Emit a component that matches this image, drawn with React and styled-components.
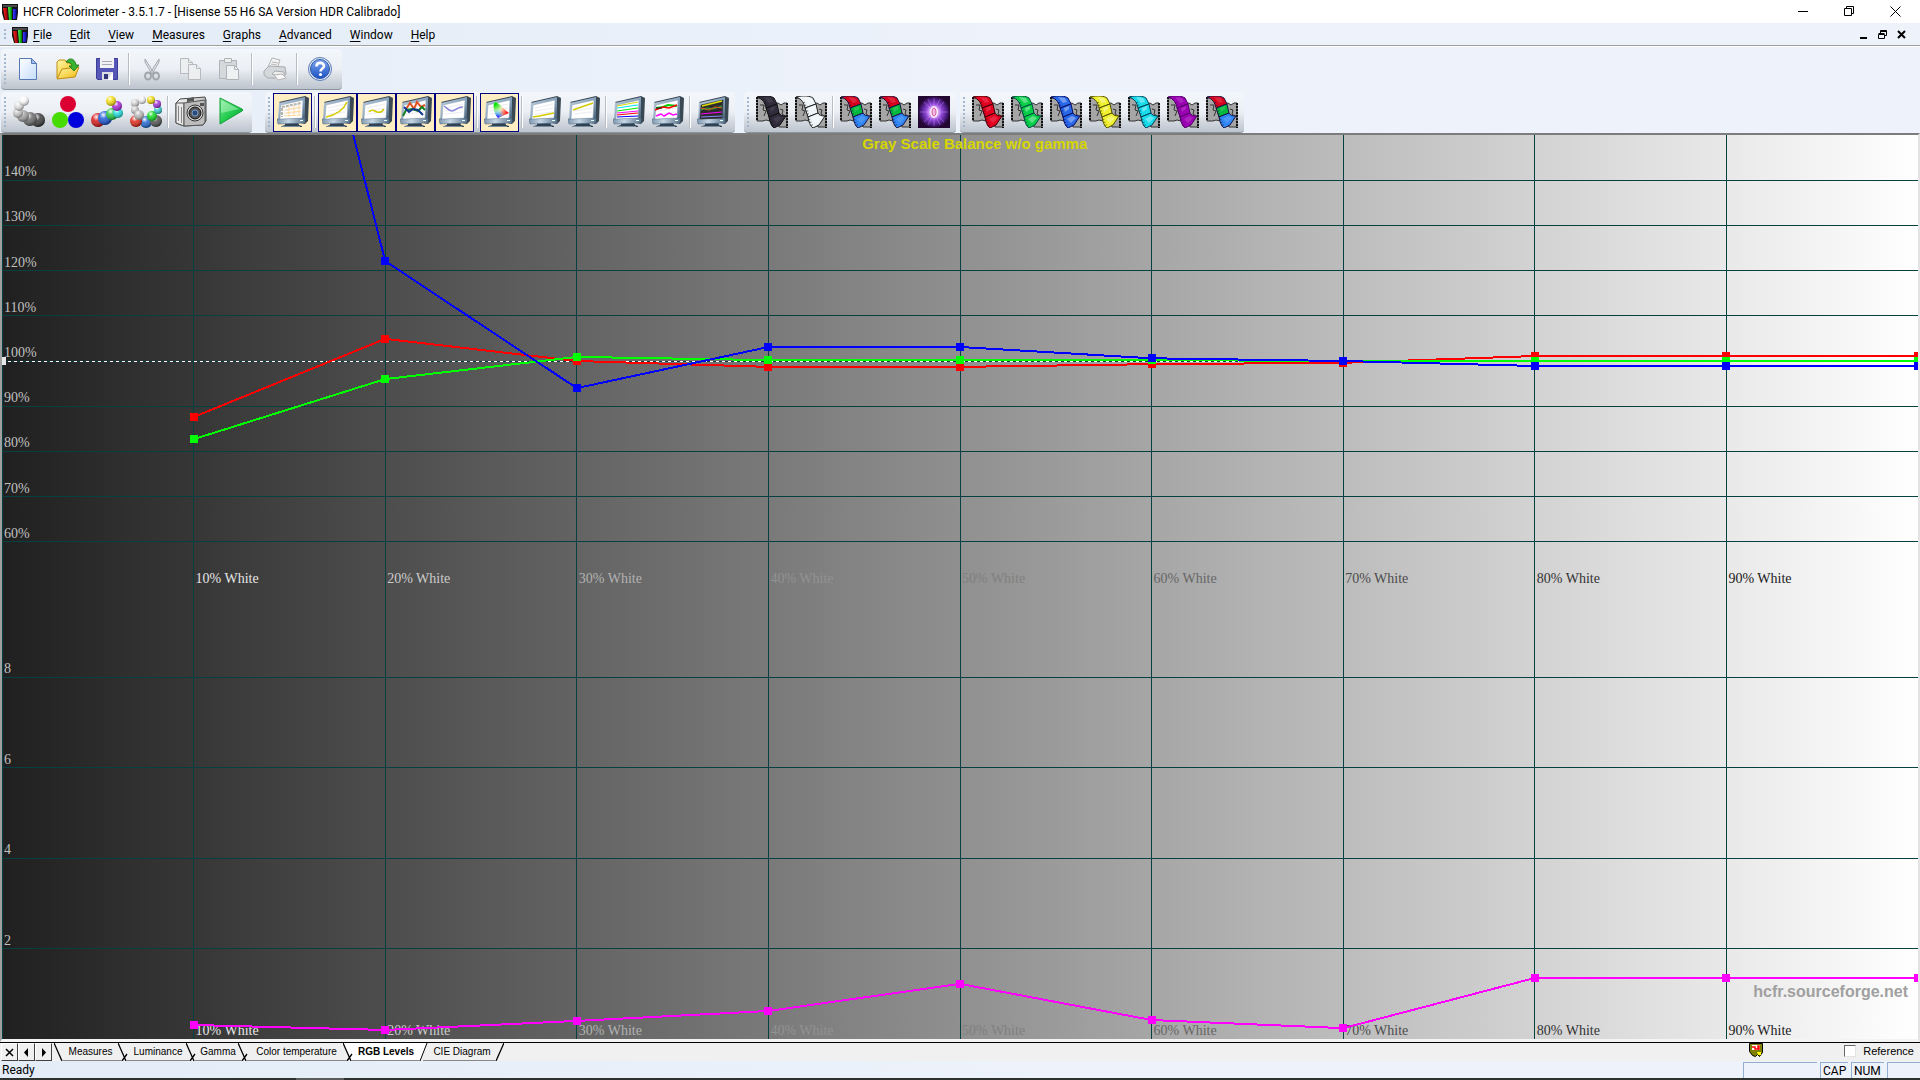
import { useState } from "react";
import styled, { createGlobalStyle } from "styled-components";

const GlobalStyle = createGlobalStyle`
  * { box-sizing: border-box; }
  html, body { margin: 0; padding: 0; }
  body { background: #eef3fb; overflow: hidden; }
  button { font: inherit; color: inherit; border: 0; padding: 0; background: none; }
`;

const menus = ["File", "Edit", "View", "Measures", "Graphs", "Advanced", "Window", "Help"];

/* ---------- chart data ---------- */

const red = [87.6, 104.9, 100, 98.7, 98.7, 99.3, 99.6, 101.1, 101.1, 101.1];
const green = [82.7, 96, 100.9, 100.2, 100.2, 100.2, 100, 100, 100, 100];
const blue = [289, 122.1, 94, 103.1, 103.1, 100.6, 100, 98.9, 98.9, 98.9];
const deltaE = [0.31, 0.2, 0.4, 0.62, 1.22, 0.42, 0.24, 1.35, 1.35, 1.35];

const levelY = (v) => (150 - v) / 2;
const deltaY = (v) => 100 - v * 5;

const levels = [140, 130, 120, 110, 100, 90, 80, 70, 60];
const deltas = [8, 6, 4, 2];
const whites = [
  { at: 10, color: "#e6e6e6" },
  { at: 20, color: "#cccccc" },
  { at: 30, color: "#b2b2b2" },
  { at: 40, color: "#929292" },
  { at: 50, color: "#808080" },
  { at: 60, color: "#666666" },
  { at: 70, color: "#4c4c4c" },
  { at: 80, color: "#333333" },
  { at: 90, color: "#1a1a1a" },
];

const Series = ({ values, toY, color }) => (
  <g fill={color} stroke={color}>
    {values.slice(1).map((v, i) => (
      <line
        key={i}
        x1={`${(i + 1) * 10}%`}
        y1={`${toY(values[i])}%`}
        x2={`${(i + 2) * 10}%`}
        y2={`${toY(v)}%`}
        strokeWidth="2"
      />
    ))}
    {values.map((v, i) => (
      <Marker key={i} x={`${(i + 1) * 10}%`} y={`${toY(v)}%`} width="8" height="8" />
    ))}
  </g>
);

const Chart = () => (
  <ChartArea>
    <Plot role="img" aria-label="Gray Scale Balance w/o gamma">
      <g stroke="#064040" shapeRendering="crispEdges">
        <line x1="0.5" y1="0" x2="0.5" y2="100%" />
        {whites.map((w) => (
          <line key={w.at} x1={`${w.at}%`} y1="0" x2={`${w.at}%`} y2="100%" />
        ))}
        {levels.map((l) => (
          <line key={l} x1="0" y1={`${levelY(l)}%`} x2="100%" y2={`${levelY(l)}%`} />
        ))}
        {deltas.map((d) => (
          <line key={d} x1="0" y1={`${deltaY(d)}%`} x2="100%" y2={`${deltaY(d)}%`} />
        ))}
      </g>
      <line x1="6" y1="25%" x2="100%" y2="25%" stroke="#fff" strokeDasharray="3 3" shapeRendering="crispEdges" />
      <Marker x="0" y="25%" width="4" height="8" fill="#e8e8e8" />

      {levels.map((l) => (
        <AxisLabel key={l} x="2" y={`${levelY(l)}%`} dy="-4">{l}%</AxisLabel>
      ))}
      {deltas.map((d) => (
        <AxisLabel key={d} x="2" y={`${deltaY(d)}%`} dy="-4">{d}</AxisLabel>
      ))}
      {["50%", "100%"].map((y) =>
        whites.map((w) => (
          <AxisLabel key={w.at} x={`${w.at}%`} y={y} dx="2" dy="-4" $color={w.color}>
            {w.at}% White
          </AxisLabel>
        ))
      )}
      <PlotTitle x="45%" y="14" dx="-2">Gray Scale Balance w/o gamma</PlotTitle>
      <g shapeRendering="crispEdges">
        <Series values={red} toY={levelY} color="#ff0000" />
        <Series values={green} toY={levelY} color="#00ff00" />
        <Series values={blue} toY={levelY} color="#0000ff" />
        <Series values={deltaE} toY={deltaY} color="#ff00ff" />
      </g>
      <Site x="100%" y="100%" dx="-10" dy="-42">hcfr.sourceforge.net</Site>
    </Plot>
  </ChartArea>
);

/* ---------- icons ---------- */

const Defs = () => (
  <HiddenSvg aria-hidden="true">
    <defs>
      <radialGradient id="shine" cx="0.38" cy="0.28" r="0.7">
        <stop offset="0" stopColor="#fff" stopOpacity="0.95" />
        <stop offset="0.4" stopColor="#fff" stopOpacity="0.15" />
        <stop offset="1" stopColor="#000" stopOpacity="0.4" />
      </radialGradient>
      <linearGradient id="bezel" x1="0" y1="0" x2="1" y2="1">
        <stop offset="0" stopColor="#c3d3e2" />
        <stop offset="0.6" stopColor="#7f9ab4" />
        <stop offset="1" stopColor="#3d5468" />
      </linearGradient>
      <linearGradient id="bezelLow" x1="0" y1="0" x2="1" y2="0">
        <stop offset="0" stopColor="#7e97ae" />
        <stop offset="0.4" stopColor="#c5d6e4" />
        <stop offset="1" stopColor="#5c7690" />
      </linearGradient>
      <linearGradient id="page" x1="0" y1="0" x2="1" y2="1">
        <stop offset="0" stopColor="#fff" />
        <stop offset="1" stopColor="#c4dcfa" />
      </linearGradient>
      <linearGradient id="folder" x1="0" y1="0" x2="1" y2="1">
        <stop offset="0" stopColor="#fff8a8" />
        <stop offset="1" stopColor="#f3b80c" />
      </linearGradient>
      <linearGradient id="help" x1="0" y1="0" x2="0" y2="1">
        <stop offset="0" stopColor="#7ea8ee" />
        <stop offset="1" stopColor="#1a50c4" />
      </linearGradient>
      <linearGradient id="play" x1="0" y1="0" x2="1" y2="1">
        <stop offset="0" stopColor="#86eb9c" />
        <stop offset="0.5" stopColor="#24cd50" />
        <stop offset="1" stopColor="#0a9a36" />
      </linearGradient>
      <linearGradient id="metal" x1="0" y1="0" x2="1" y2="1">
        <stop offset="0" stopColor="#fafafa" />
        <stop offset="1" stopColor="#8f8f8f" />
      </linearGradient>
      <linearGradient id="barR"><stop offset="0" stopColor="#ff2020" /><stop offset="1" stopColor="#800" /></linearGradient>
      <linearGradient id="barG"><stop offset="0" stopColor="#50ff50" /><stop offset="1" stopColor="#070" /></linearGradient>
      <linearGradient id="barB"><stop offset="0" stopColor="#3a3aff" /><stop offset="1" stopColor="#008" /></linearGradient>
      <radialGradient id="cieGreen" gradientUnits="userSpaceOnUse" cx="10" cy="7" r="10">
        <stop offset="0.2" stopColor="#00e400" />
        <stop offset="1" stopColor="#00e400" stopOpacity="0" />
      </radialGradient>
      <radialGradient id="cieRed" gradientUnits="userSpaceOnUse" cx="25" cy="18" r="10">
        <stop offset="0.2" stopColor="#ff1010" />
        <stop offset="1" stopColor="#ff2020" stopOpacity="0" />
      </radialGradient>
      <radialGradient id="cieBlue" gradientUnits="userSpaceOnUse" cx="13" cy="23" r="10">
        <stop offset="0.2" stopColor="#2410ff" />
        <stop offset="0.6" stopColor="#20a8ff" stopOpacity="0.6" />
        <stop offset="1" stopColor="#20d8ff" stopOpacity="0" />
      </radialGradient>
      <radialGradient id="nova">
        <stop offset="0" stopColor="#fff" />
        <stop offset="0.22" stopColor="#f4c8ff" />
        <stop offset="0.5" stopColor="#9048d8" />
        <stop offset="0.8" stopColor="#4c1c84" />
        <stop offset="1" stopColor="#220830" />
      </radialGradient>
    </defs>
  </HiddenSvg>
);

const AppIcon = () => (
  <svg width="16" height="16" viewBox="0 0 16 16">
    <path fill="#141414" d="M0 0h16v16H0z" />
    <path fill="#4a4a4a" d="M1 1h14v2H1z" />
    <path fill="url(#barR)" d="M1 4h4l1 12H3z" />
    <path fill="url(#barG)" d="M6 3h4v13H7z" />
    <path fill="url(#barB)" d="M11 5h4l-1 10h-3z" />
    <path fill="#fff" d="M0 9l2 7H0zM16 9l-1 7h1z" />
  </svg>
);

const Icon24 = ({ children }) => <svg width="24" height="24" viewBox="0 0 24 24">{children}</svg>;
const Icon32 = ({ children }) => <svg width="32" height="32" viewBox="0 0 32 32">{children}</svg>;

const NewIcon = () => (
  <Icon24>
    <path fill="url(#page)" stroke="#5878b4" d="M2.500 1.500h12l5 5v16h-17z" />
    <path fill="#9dbcf0" stroke="#5878b4" d="M14.500 1.500v5h5z" />
  </Icon24>
);

const OpenIcon = () => (
  <Icon24>
    <path fill="url(#folder)" stroke="#c08c10" d="M1 21V5l2-2h6l2 3h8v5" />
    <path fill="url(#folder)" stroke="#c08c10" d="M1 22l5-10 17-2-4 10z" />
    <path fill="#38b432" stroke="#147010" strokeWidth="0.8" d="M10 5c3-5 9-4 10 3h3l-5 6-5-5h3c-1-3-3-4-6-4z" />
  </Icon24>
);

const SaveIcon = () => (
  <Icon24>
    <path fill="#5656b8" stroke="#3c3c98" d="M1.500 1.500h21v21h-20l-1-1z" />
    <path fill="#f2f2f6" d="M5 1h14v10H5z" />
    <path stroke="#a8a8b4" d="M7 4.500h10M7 7.500h10" />
    <path fill="#dcdce4" d="M7 15h11v8H7z" />
    <path fill="#33337c" d="M9 17h4v5H9z" />
    <path fill="#fff" d="M13 23l4-7h1v7z" />
  </Icon24>
);

const CutIcon = () => (
  <Icon24>
    <g fill="none" stroke="#a2a6ac">
      <path fill="#e8eaec" d="M5 2l9 14-2 1L5 5zM19 2l-9 14 2 1 7-12z" />
      <ellipse cx="8" cy="19" rx="3" ry="3.500" strokeWidth="2" />
      <ellipse cx="16" cy="19" rx="3" ry="3.500" strokeWidth="2" />
    </g>
  </Icon24>
);

const CopyIcon = () => (
  <Icon24>
    <g fill="#eceef0" stroke="#b6babe">
      <path d="M1.500 1.500h8l4 4v11h-12z" />
      <path d="M9.500 1.500v4h4" />
      <path d="M9.500 7.500h8l4 4v11h-12z" />
      <path d="M17.500 7.500v4h4" />
    </g>
  </Icon24>
);

const PasteIcon = () => (
  <Icon24>
    <path fill="#d6d9dc" stroke="#b0b4b8" d="M1.500 3.500h17v18h-17z" />
    <path fill="#eee" stroke="#b0b4b8" d="M6.500 1.500h7v4h-7z" />
    <path fill="#f0f1f3" stroke="#b0b4b8" d="M8.500 8.500h8l4 4v10h-12z" />
    <path fill="none" stroke="#b0b4b8" d="M16.500 8.500v4h4" />
  </Icon24>
);

const PrintIcon = () => (
  <Icon24>
    <path fill="#f4f4f4" stroke="#b4b4b4" d="M5 10l4-9 8 2-3 9z" />
    <path fill="#d5d8db" stroke="#a6aaae" d="M1 14l5-5 16 1 1 7-3 4H5l-4-3z" />
    <path fill="#eee" stroke="#a6aaae" d="M9 17l3-3 9 1v3l-3 3z" />
    <path stroke="#b8b8b8" d="M9 5l6 1M8 7l6 1" />
    <path fill="#f8f8f8" stroke="#b4b4b4" d="M11 18l8-1 4 4-8 2z" />
  </Icon24>
);

const HelpIcon = () => (
  <Icon24>
    <circle cx="12" cy="12" r="11.500" fill="#dfe8f6" stroke="#5a7cb8" />
    <circle cx="12" cy="12" r="9.500" fill="url(#help)" stroke="#3458a8" />
    <path fill="none" stroke="#fff" strokeWidth="2.600" d="M8.500 9.500c0-5 7.500-4.500 7.500-.5 0 2.500-3.500 2.500-3.500 5.500" />
    <circle cx="12.500" cy="17.500" r="1.600" fill="#fff" />
  </Icon24>
);

const Balls = ({ list }) => (
  <Icon32>
    {list.map(([x, y, r, color], i) => (
      <g key={i}>
        <circle cx={x} cy={y} r={r} fill={color} />
        <circle cx={x} cy={y} r={r} fill="url(#shine)" />
      </g>
    ))}
  </Icon32>
);

const grayBalls = [[25, 24, 7, "#3c3c3c"], [17, 23, 7, "#6a6a6a"], [10, 20, 6, "#a0a0a0"], [5, 17, 5, "#c4c4c4"], [6, 10, 5, "#e0e0e0"], [11, 5, 5, "#f6f6f6"]];
const colorBalls = [[7, 24, 7, "#d81818"], [14, 22, 7, "#1c58d8"], [21, 18, 6, "#20c840"], [27, 17, 5, "#20dcdc"], [26, 10, 5, "#a828d8"], [20, 5, 5, "#f4dc10"]];
const ringBalls = [[16, 26, 6, "#2068d0"], [26, 25, 6, "#505050"], [6, 25, 6, "#e02818"], [22, 20, 5, "#10dc20"], [28, 14, 4, "#30c8c8"], [27, 8, 4, "#a030d8"], [21, 4, 4, "#f0d810"], [12, 4, 4, "#eeeeee"], [5, 7, 4, "#d0d0d0"], [5, 14, 4, "#c4c4c4"], [9, 19, 5, "#b8b8b8"]];

const PrimariesIcon = () => (
  <Icon32>
    <circle cx="16" cy="8" r="8" fill="#dc0032" />
    <circle cx="8" cy="24" r="8" fill="#46dc00" />
    <circle cx="24" cy="24" r="8" fill="#0000dc" />
  </Icon32>
);

const CameraIcon = () => (
  <Icon32>
    <path fill="url(#metal)" stroke="#444" d="M1 7l4-4 25-2 1 3v21l-3 4-19 1-8-3z" />
    <path fill="#e8e8e8" stroke="#555" d="M1 7h8v23l-8-3z" />
    <path fill="#bdbdbd" stroke="#555" d="M9 7l21-3v22l-2 3-19 1z" />
    <path fill="#555" d="M12 3l7-2v4l-7 1zM25 7h4v3h-4z" />
    <circle cx="20" cy="17" r="8" fill="#ddd" stroke="#333" />
    <circle cx="20" cy="17" r="6" fill="#555" stroke="#111" />
    <circle cx="20" cy="17" r="3" fill="#2c4a78" stroke="#7aa0d0" />
    <path stroke="#888" d="M3.500 10v15M6.500 11v16" />
  </Icon32>
);

const PlayIcon = () => (
  <Icon32>
    <path fill="url(#play)" stroke="#10a038" strokeLinejoin="round" d="M6 2l22 11q2 1 0 2L6 28z" />
    <path fill="#b8f8c4" fillOpacity="0.5" d="M7 4l18 9L7 17z" />
  </Icon32>
);

const Monitor = ({ dark, children }) => (
  <Icon32>
    <path fill="#2e4254" d="M8 26h13l1 3 3 1v1H5v-1l3-1z" />
    <path fill="#788c9e" d="M4 30h19v1H4z" />
    <path fill="#3a4854" d="M2 6l26-6 4 2-1 23-3 3-5-1z" />
    <path fill="url(#bezel)" d="M2 7l26-6v25H1z" />
    <path fill="url(#bezelLow)" stroke="#48617a" strokeWidth="0.500" d="M0 23l28-1v5l-27 1z" />
    <path fill={dark ? "#2c2c2c" : "#fff"} stroke={dark ? "#222" : "#8ba0b4"} strokeWidth="0.500" d="M4 9l22-5-1 18-22 1z" />
    {!dark && <path stroke="#ececf2" d="M6 12l18-4M6 15l18-3M6 18l18-2" />}
    <path fill="#e8fff8" d="M23 24h3v1h-3z" />
    <g fill="none" strokeWidth="1">{children}</g>
  </Icon32>
);

/* ribbon of three frames in front of a piece of perforated film */
const Film = ({ colors, edge = "#222", shine = 0.35 }) => (
  <Icon32>
    <path fill="#a6a6a6" stroke="#333" d="M1 2h9l4 23-4-1-3 1H1z" />
    <path fill="#a6a6a6" stroke="#333" d="M18 8l4-1 3 2 3-2h3v24h-8l-3-8z" />
    <path stroke="#111" strokeWidth="2" strokeDasharray="2 1" d="M1 1v24M31 7v25" />
    <path fill="none" stroke="#333" d="M4 9h4l-1 5 3 1-2 5M24 13l3 1-1 4 3 2-2 4" />
    <path fill={colors[0]} stroke={edge} d="M1 1c8-2 14-1 17 1 1 2 2 4 3 6l-11 4C9 7 7 3 1 1z" />
    <path fill={colors[1]} stroke={edge} d="M10 12l11-4 2 9-10 4z" />
    <path fill={colors[2]} stroke={edge} d="M13 21l10-4c1 2 3 3 7 3l-6 9-6 3c-3-2-4-6-5-11z" />
    <path fill="#fff" fillOpacity={shine} d="M8 1l7 1 2 4-4 1zM14 12l5-2v3l-4 3zM17 23l5-3 4 2-5 5z" />
    <path fill="none" stroke={edge} strokeOpacity="0.6" strokeWidth="2" strokeDasharray="1 2" d="M9 6l3 8 2 9 4 8" />
  </Icon32>
);

const NovaIcon = () => (
  <Icon32>
    <path fill="#220830" d="M0 0h32v32H0z" />
    <circle cx="16" cy="16" r="16" fill="url(#nova)" />
    <path stroke="#d49af8" strokeOpacity="0.4" d="M16 2v28M2 16h28M6 6l20 20M26 6L6 26M10 3l12 26M22 3L10 29" />
    <ellipse cx="16" cy="16" rx="4" ry="6" fill="#f8e8ff" />
    <ellipse cx="16" cy="16" rx="2" ry="4" fill="#f0b8e8" stroke="#d04880" strokeWidth="0.8" />
  </Icon32>
);

const ReferenceIcon = () => (
  <svg width="14" height="14" viewBox="0 0 14 14">
    <path fill="#808000" stroke="#000" d="M.5.500h13v9l-3 4-2-2-2 2-3-1-3-4z" />
    <path fill="#fff" d="M3 2h8v5H3z" />
    <path fill="none" stroke="#f00" strokeWidth="1.500" d="M3 4h3v2h3V3h1v4" />
    <path fill="#ff0" d="M8 9h4v3H9z" />
  </svg>
);

/* ---------- toolbars ---------- */

const fileTools = [
  { name: "New", icon: <NewIcon /> },
  { name: "Open", icon: <OpenIcon /> },
  { name: "Save", icon: <SaveIcon /> },
  null,
  { name: "Cut", icon: <CutIcon /> },
  { name: "Copy", icon: <CopyIcon /> },
  { name: "Paste", icon: <PasteIcon /> },
  null,
  { name: "Print", icon: <PrintIcon /> },
  null,
  { name: "About", icon: <HelpIcon /> },
];

const measureTools = [
  { name: "Measure gray scale", icon: <Balls list={grayBalls} /> },
  { name: "Measure primaries", icon: <PrimariesIcon /> },
  { name: "Measure secondaries", icon: <Balls list={colorBalls} /> },
  { name: "Measure all", icon: <Balls list={ringBalls} /> },
  null,
  { name: "Configure sensor", icon: <CameraIcon /> },
  { name: "Start measures", icon: <PlayIcon /> },
];

const cieShape = "M11 6c4 1 9 7 14 11l-11 5C10 18 8 9 11 6z";

const viewTools = [
  {
    name: "Measures", on: true,
    icon: <Monitor><path stroke="#b8b4a8" strokeWidth="2" strokeDasharray="3 1" d="M5 11l19-4M5 12v9" /><path stroke="#ffd9a0" d="M8 14l16-3M8 17l16-2M7 20l17-1M12 11v10M17 10v10M22 9v11" /></Monitor>,
  },
  null,
  { name: "Luminance", on: true, icon: <Monitor><path stroke="#d4cc00" strokeWidth="1.500" d="M4 21c10-2 17-6 21-15" /></Monitor> },
  { name: "Gamma", on: true, icon: <Monitor><path stroke="#d4cc00" strokeWidth="1.500" d="M8 16c3-4 5-1 8 0s5 0 7-3" /></Monitor> },
  {
    name: "RGB levels", on: true,
    icon: <Monitor><path stroke="#e05020" strokeWidth="2" d="M6 13l4-6 4 6 3-7 4 5 4-2" /><path stroke="#108020" strokeWidth="2" d="M3 20l3-6 7-1 5 2 4-4 3 3" /><path stroke="#103890" strokeWidth="2" d="M4 11l5 5 4-3 5 1 5 5" /></Monitor>,
  },
  { name: "Color temperature", on: true, icon: <Monitor><path stroke="#8888dc" strokeWidth="1.500" d="M5 10c4 3 5 5 8 5s7-5 11-4" /></Monitor> },
  null,
  {
    name: "CIE diagram", on: true,
    icon: <Monitor><path fill="#fff4d0" d={cieShape} /><path fill="url(#cieGreen)" d={cieShape} /><path fill="url(#cieBlue)" d={cieShape} /><path fill="url(#cieRed)" d={cieShape} /></Monitor>,
  },
  null,
  { name: "Near black", icon: <Monitor><path stroke="#d4cc00" strokeWidth="1.500" d="M4 21l6-1 15-3" /></Monitor> },
  { name: "Near white", icon: <Monitor><path stroke="#d4cc00" strokeWidth="1.500" d="M5 14l20-7" /></Monitor> },
  null,
  {
    name: "Saturation luminance",
    icon: <Monitor><path stroke="#d8d800" d="M4 10l21-4" /><path stroke="#0ee" d="M4 12l21-3" /><path stroke="#0e0" d="M4 15l21-3" /><path stroke="#f0f" d="M4 17l21-2" /><path stroke="#f00" d="M4 19l21-2" /><path stroke="#00f" d="M4 21l21-1" /></Monitor>,
  },
  {
    name: "Saturation shift",
    icon: <Monitor><path stroke="#00d000" strokeWidth="2" d="M4 12l7-1 5-2 9 1" /><path stroke="#f00" strokeWidth="1.500" d="M3 14l8-3 6 1 8-3" /><path stroke="#113" d="M4 12l6 0" /><path stroke="#f0f" strokeWidth="1.500" d="M4 20l5-2 3 2 5-3 4 2 4-1" /></Monitor>,
  },
  null,
  {
    name: "Measures combo",
    icon: <Monitor dark><path stroke="#e0e000" strokeWidth="1.500" d="M5 10l20-5" /><path stroke="#30b030" d="M4 14l6-2 6 1 9-3" /><path stroke="#e06020" d="M4 12l8 2 6-3 7 1" /><path stroke="#f0f" d="M4 18l21-2" /><path stroke="#88f" d="M4 21l21-1" /></Monitor>,
  },
];

const rgb = ["#d8001c", "#00b83c", "#2f86f4"];
const solid = (c) => [c, c, c];

const contrastTools = [
  { name: "Near black scale", icon: <Film colors={solid("#302c3c")} edge="#111" shine={0.08} /> },
  { name: "Near white scale", icon: <Film colors={solid("#eef4f8")} /> },
  null,
  { name: "Primary saturations", icon: <Film colors={rgb} edge="#1a1440" shine={0.15} /> },
  { name: "Secondary saturations", icon: <Film colors={rgb} edge="#1a1440" shine={0.15} /> },
  { name: "Contrast", icon: <NovaIcon /> },
];

const saturationTools = [
  { name: "Red saturation", icon: <Film colors={solid("#e40020")} edge="#400008" shine={0.15} /> },
  { name: "Green saturation", icon: <Film colors={solid("#08d048")} edge="#004c40" /> },
  { name: "Blue saturation", icon: <Film colors={solid("#2868e8")} edge="#080c60" /> },
  { name: "Yellow saturation", icon: <Film colors={solid("#f0f030")} edge="#505000" /> },
  { name: "Cyan saturation", icon: <Film colors={solid("#18dcec")} edge="#003c50" /> },
  { name: "Magenta saturation", icon: <Film colors={solid("#9c00b4")} edge="#500068" shine={0.15} /> },
  { name: "All saturations", icon: <Film colors={rgb} edge="#1a1440" shine={0.15} /> },
];

const Tools = ({ label, items, after }) => (
  <Toolbar role="toolbar" aria-label={label} $after={after}>
    <Grip $tall />
    {items.map((t, i) =>
      t ? (
        <ToolButton key={i} aria-label={t.name} $on={t.on}>{t.icon}</ToolButton>
      ) : (
        <Separator key={i} />
      )
    )}
  </Toolbar>
);

/* ---------- view tabs ---------- */

const views = [
  { name: "Measures", width: 55 },
  { name: "Luminance", width: 56 },
  { name: "Gamma", width: 40 },
  { name: "Color temperature", width: 93 },
  { name: "RGB Levels", width: 62 },
  { name: "CIE Diagram", width: 66 },
];

const Slant = ({ before, after }) => (
  <svg width="12" height="18" viewBox="0 0 12 18">
    {after && <path fill="#fff" d="M0 0h12v18H8z" />}
    {before && <path fill="#fff" d="M0 0h10L3 18H0z" />}
    {before ? (
      <path stroke="#000" d="M10 0L3 18" />
    ) : (
      <path stroke="#000" strokeWidth="1.300" d="M0 0l8 18M9 11l-5 7" />
    )}
    <path stroke="#888" d={before ? "M0 17.500h3M6 17.500h6" : "M0 17.500h4M8 17.500h4"} />
  </svg>
);

const ViewTabs = () => {
  const [current, setCurrent] = useState("RGB Levels");
  const [reference, setReference] = useState(false);

  return (
    <TabBar>
      <NavButton aria-label="Close view">
        <svg width="9" height="9" viewBox="0 0 9 9"><path stroke="#000" strokeWidth="1.500" d="M1 1l7 7M8 1L1 8" /></svg>
      </NavButton>
      <NavButton aria-label="Previous view">
        <svg width="9" height="9" viewBox="0 0 9 9"><path d="M6 0v9L2 4.500z" /></svg>
      </NavButton>
      <NavButton aria-label="Next view">
        <svg width="9" height="9" viewBox="0 0 9 9"><path d="M3 0v9l4-4.500z" /></svg>
      </NavButton>
      <TabList role="tablist">
        {views.map((v, i) => (
          <TabGroup key={v.name}>
            {i === 0 ? (
              <svg width="9" height="18" viewBox="0 0 9 18"><path stroke="#000" strokeWidth="1.300" d="M0 0l8 18" /></svg>
            ) : (
              <Slant before={views[i - 1].name === current} after={v.name === current} />
            )}
            <Tab role="tab" aria-selected={v.name === current} $on={v.name === current} $width={v.width} onClick={() => setCurrent(v.name)}>
              {v.name}
            </Tab>
          </TabGroup>
        ))}
        <svg width="9" height="18" viewBox="0 0 9 18"><path stroke="#000" strokeWidth="1.300" d="M9 0L1 18" /></svg>
      </TabList>
      <ReferenceIcon />
      <ReferenceLabel>
        <CheckBox type="checkbox" checked={reference} onChange={(e) => setReference(e.target.checked)} />
        Reference
      </ReferenceLabel>
    </TabBar>
  );
};

const App = () => (
  <Window>
    <GlobalStyle />
    <Defs />
    <TitleBar>
      <AppIcon />
      <Caption>HCFR Colorimeter - 3.5.1.7 - [Hisense 55 H6 SA Version HDR Calibrado]</Caption>
      <CaptionButton aria-label="Minimize">
        <svg width="11" height="11" viewBox="0 0 11 11"><path stroke="#000" d="M0 5.500h10" /></svg>
      </CaptionButton>
      <CaptionButton aria-label="Restore">
        <svg width="11" height="11" viewBox="0 0 11 11"><path fill="none" stroke="#000" d="M.5 2.500h7v7h-7zM2.500 2.500v-2h7v7h-2" /></svg>
      </CaptionButton>
      <CaptionButton aria-label="Close">
        <svg width="11" height="11" viewBox="0 0 11 11"><path stroke="#000" d="M.5.500l10 10M10.500.500l-10 10" /></svg>
      </CaptionButton>
    </TitleBar>
    <MenuBar>
      <Grip />
      <AppIcon />
      <MenuList>
        {menus.map((m) => (
          <MenuButton key={m}><u>{m[0]}</u>{m.slice(1)}</MenuButton>
        ))}
      </MenuList>
      <ChildButton aria-label="Minimize document">
        <svg width="9" height="9" viewBox="0 0 9 9"><path d="M1 7h7v2H1z" /></svg>
      </ChildButton>
      <ChildButton aria-label="Restore document">
        <svg width="9" height="9" viewBox="0 0 9 9"><path fill="none" stroke="#000" d="M.5 4.500h6v4h-6zM.5 3.500h6M2.500 3V.500h6v5H7M2.500 1.500h6" /></svg>
      </ChildButton>
      <ChildButton aria-label="Close document">
        <svg width="9" height="9" viewBox="0 0 9 9"><path stroke="#000" strokeWidth="2" d="M1 1l7 7M8 1L1 8" /></svg>
      </ChildButton>
    </MenuBar>
    <ToolArea>
      <ToolRow>
        <Tools label="File" items={fileTools} />
      </ToolRow>
      <ToolRow>
        <Tools label="Measures" items={measureTools} after={13} />
        <Tools label="Views" items={viewTools} after={9} />
        <Tools label="Contrast" items={contrastTools} after={4} />
        <Tools label="Saturations" items={saturationTools} />
      </ToolRow>
    </ToolArea>
    <Chart />
    <ViewTabs />
    <StatusBar>
      <StatusText>Ready</StatusText>
      <Pane $width={74} />
      <Pane $width={28}>CAP</Pane>
      <Pane $width={33}>NUM</Pane>
      <Pane $width={33} />
    </StatusBar>
    <Taskbar><TaskItem /></Taskbar>
  </Window>
);

export default App;

const Window = styled.div`
  display: flex;
  flex-direction: column;
  height: 100vh;
  overflow: hidden;
  font-family: Roboto, "Open Sans", sans-serif;
  font-size: 12px;
  color: #000;
`;

const HiddenSvg = styled.svg`
  position: absolute;
  width: 0;
  height: 0;
`;

const TitleBar = styled.header`
  display: flex;
  align-items: center;
  height: 23px;
  padding: 0 2px;
  background: #fff;
`;

const Caption = styled.div`
  flex: 1;
  padding-left: 5px;
  white-space: nowrap;
`;

const CaptionButton = styled.button`
  display: flex;
  align-items: center;
  justify-content: center;
  width: 46px;
  height: 20px;
`;

const MenuBar = styled.nav`
  display: flex;
  align-items: center;
  height: 24px;
  padding: 0 9px 0 4px;
  background: linear-gradient(90deg, #e3ecf7, #eef3fb 60%);
  border-bottom: 1px solid #fff;
  box-shadow: inset 0 -1px #a0a0a0;
`;

const MenuList = styled.div`
  display: flex;
  flex: 1;
  gap: 18px;
  padding-left: 5px;
`;

const MenuButton = styled.button`
  line-height: 20px;

  u {
    text-underline-offset: 2px;
  }
`;

const ChildButton = styled.button`
  display: flex;
  align-items: center;
  justify-content: center;
  width: 19px;
  height: 19px;
`;

const Grip = styled.span`
  flex: none;
  width: ${(p) => (p.$tall ? 4 : 8)}px;
  height: ${(p) => (p.$tall ? 30 : 12)}px;
  margin-right: ${(p) => (p.$tall ? 1 : 0)}px;
  background: repeating-linear-gradient(180deg, #a3b7cf 0 2px, transparent 2px 4px) 0 0 / 2px 100% no-repeat;
`;

const ToolArea = styled.div`
  display: flex;
  flex-direction: column;
  gap: 2px;
  padding: 2px 0 0 1px;
  background: linear-gradient(90deg, #e6eef8, #eef3fb 60%);
`;

const ToolRow = styled.div`
  display: flex;
`;

const Toolbar = styled.div`
  display: flex;
  align-items: center;
  height: 41px;
  padding: 0 3px;
  margin-right: ${(p) => p.$after || 0}px;
  border-radius: 4px;
  border-bottom: 1px solid #8d949c;
  background: linear-gradient(180deg, #f3f6fa 0%, #eceff4 50%, #d3d8df 75%, #bcc4ce 100%);
`;

const ToolButton = styled.button`
  display: flex;
  align-items: center;
  justify-content: center;
  width: 39px;
  height: 39px;
  border: 1px solid ${(p) => (p.$on ? "#000080" : "transparent")};
  background: ${(p) => (p.$on ? "#ffeec2" : "none")};
`;

const Separator = styled.span`
  width: 2px;
  height: 32px;
  margin: 0 2px;
  border-left: 1px solid #b9bec6;
  border-right: 1px solid #fff;
`;

const ChartArea = styled.main`
  flex: 1;
  min-height: 0;
  border: 2px solid #a0a0a0;
  border-top-color: #7c7c7c;
  border-right-color: #e3e3e3;
  border-bottom: 3px solid #f4f4f4;
  background: linear-gradient(90deg, #202020, #4d4d4d 20%, #ffffff);
`;

const Plot = styled.svg`
  display: block;
  width: 100%;
  height: 100%;
  font-family: "Liberation Serif", serif;
`;

const Marker = styled.rect`
  transform: translate(${(p) => (p.width === "8" ? -4 : 0)}px, -4px);
  stroke: none;
`;

const AxisLabel = styled.text`
  font-size: 14px;
  fill: ${(p) => p.$color || "#c0c0c0"};
`;

const PlotTitle = styled.text`
  font: bold 15px "Liberation Sans", Arial, sans-serif;
  fill: #d6d600;
`;

const Site = styled.text`
  font: bold 16px "Liberation Sans", Arial, sans-serif;
  text-anchor: end;
  fill: #a0a0a0;
`;

const TabBar = styled.div`
  display: flex;
  height: 19px;
  padding-left: 1px;
  border-top: 1px solid #000;
  background: #f0f0f0;
  font: 10px "Liberation Sans", Arial, sans-serif;
`;

const NavButton = styled.button`
  display: flex;
  align-items: center;
  justify-content: center;
  width: 17px;
  height: 18px;
  border: 1px solid;
  border-color: #fff #404040 #404040 #fff;
  background: #f0f0f0;
`;

const TabList = styled.div`
  display: flex;
  flex: 1;
  padding-left: 2px;
`;

const TabGroup = styled.div`
  display: flex;
`;

const Tab = styled.button`
  width: ${(p) => p.$width}px;
  height: 18px;
  white-space: nowrap;
  text-align: center;
  border-bottom: 1px solid #888;
  background: ${(p) => (p.$on ? "#fff" : "#f0f0f0")};
  font-weight: ${(p) => (p.$on ? "bold" : "normal")};
`;

const ReferenceLabel = styled.label`
  display: flex;
  align-items: center;
  gap: 7px;
  padding: 0 6px 2px 81px;
  font-size: 11px;
`;

const CheckBox = styled.input`
  appearance: none;
  width: 12px;
  height: 12px;
  margin: 0;
  border: 1px solid;
  border-color: #696969 #e3e3e3 #e3e3e3 #696969;
  background: #fff;
`;

const StatusBar = styled.footer`
  display: flex;
  gap: 3px;
  height: 17px;
  line-height: 19px;
  background: linear-gradient(90deg, #e3ecf7, #eef3fb 60%);
`;

const StatusText = styled.span`
  flex: 1;
  padding-left: 2px;
`;

const Pane = styled.span`
  width: ${(p) => p.$width}px;
  padding-left: 2px;
  margin-top: 1px;
  border-top: 1px solid #93afd0;
  border-left: 1px solid #93afd0;
  line-height: 17px;
`;

const Taskbar = styled.div`
  height: 2px;
  background: #2e322f;
`;

const TaskItem = styled.div`
  width: 48px;
  height: 2px;
  margin-left: 296px;
  background: #5a5d5a;
`;
